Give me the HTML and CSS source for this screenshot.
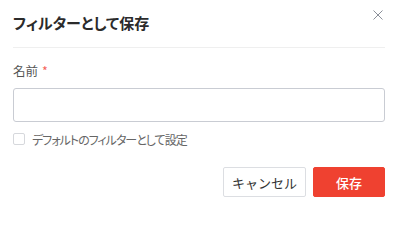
FILE: index.html
```html
<!DOCTYPE html>
<html lang="ja">
<head>
<meta charset="utf-8">
<link rel="stylesheet" href="styles.css">
</head>
<body>
<div class="dialog">
  <div class="header">
    <div class="title">フィルターとして保存</div>
    <button class="close" aria-label="閉じる">
      <svg width="10" height="10" viewBox="0 0 10 10"><path d="M0.5 0.5L9.5 9.5M9.5 0.5L0.5 9.5" stroke="#8a8f99" stroke-width="1" fill="none"/></svg>
    </button>
  </div>
  <div class="body">
    <div class="label">名前<span class="req">*</span></div>
    <input class="input" type="text">
    <label class="check"><span class="box"></span><span class="check-text">デフォルトのフィルターとして設定</span></label>
  </div>
  <div class="footer">
    <button class="btn btn-cancel">キャンセル</button>
    <button class="btn btn-save">保存</button>
  </div>
</div>
</body>
</html>
```
FILE: styles.css
```css
html, body {
  margin: 0;
  padding: 0;
  background: #fff;
}
body {
  font-family: "Noto Sans CJK JP", "Noto Sans", sans-serif;
  font-feature-settings: "palt";
  color: #333;
}
.dialog {
  width: 372px;
  padding: 0 13px 13px;
}
.header {
  height: 47px;
  border-bottom: 1px solid #efefef;
  display: flex;
  justify-content: space-between;
  align-items: flex-start;
}
.title {
  padding-top: 13px;
  line-height: 20px;
  font-size: 15px;
  font-weight: 700;
  color: #2b2b2b;
}
.close {
  margin: 10px 2px 0 0;
  padding: 0;
  border: 0;
  background: none;
  width: 10px;
  height: 10px;
  display: flex;
}
.body {
  padding-top: 14px;
}
.label {
  font-size: 12.5px;
  line-height: 18px;
  color: #555;
}
.req {
  color: #f5625a;
  margin-left: 4px;
}
.input {
  display: block;
  box-sizing: border-box;
  width: 100%;
  height: 34px;
  margin-top: 8px;
  border: 1px solid #c9ccd3;
  border-radius: 3px;
  outline: none;
}
.check {
  display: flex;
  align-items: center;
  margin-top: 9px;
  height: 16px;
}
.box {
  width: 12px;
  height: 12px;
  box-sizing: border-box;
  border: 1px solid #d6d8dc;
  border-radius: 2px;
}
.check-text {
  margin-left: 7px;
  font-size: 12px;
  color: #666;
  letter-spacing: -1px;
}
.footer {
  margin-top: 20px;
  display: flex;
  justify-content: flex-end;
  gap: 7px;
}
.btn {
  height: 30px;
  font-family: inherit;
  font-size: 13px;
  border-radius: 2px;
  padding: 0;
  cursor: pointer;
}
.btn-cancel {
  width: 83px;
  background: #fff;
  border: 1px solid #dcdee2;
  color: #333;
}
.btn-save {
  width: 72px;
  background: #ef4130;
  border: 1px solid #ef4130;
  color: #fff;
  font-weight: 500;
}
```
